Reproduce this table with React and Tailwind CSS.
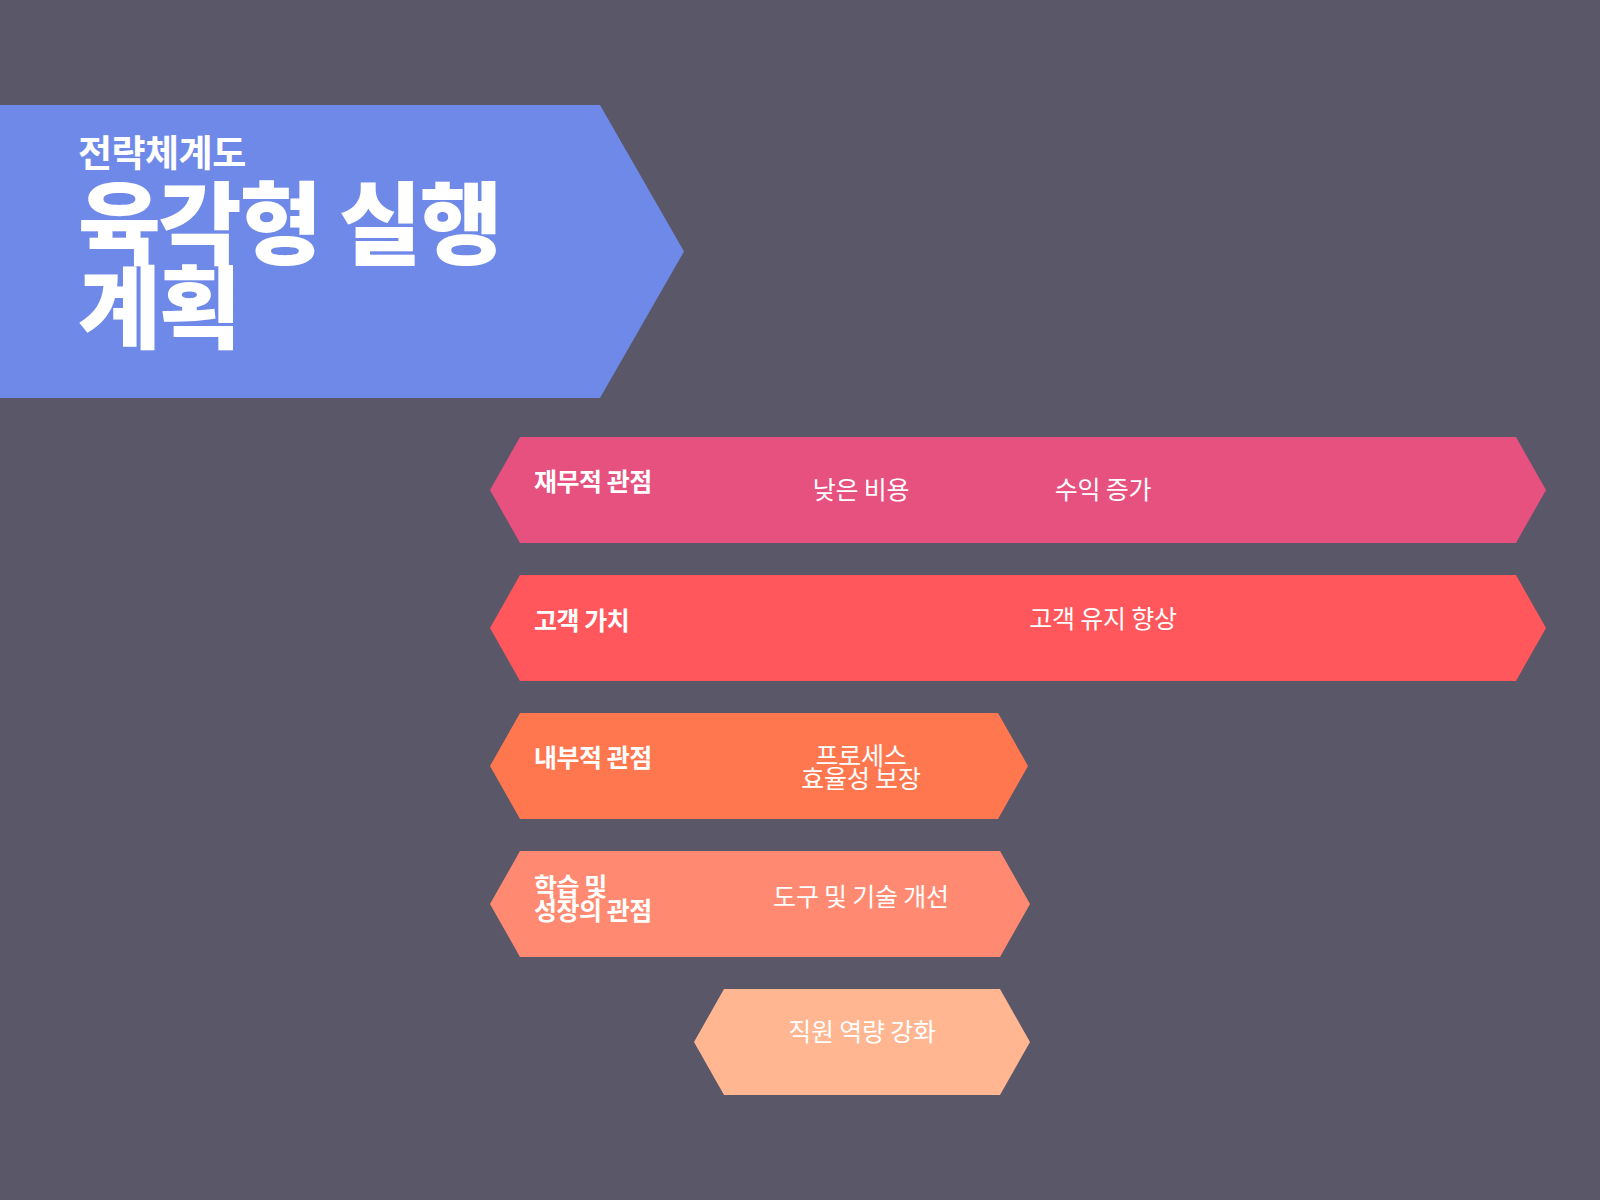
const HEX = '[clip-path:polygon(30px_0,calc(100%-30px)_0,100%_50%,calc(100%-30px)_100%,30px_100%,0_50%)]';

const rows = [
  { label: ['재무적 관점'], values: [['낮은 비용'], ['수익 증가']], bg: 'bg-[#e7517f]', width: 'w-[1056px]', lpad: 'pb-[20px]', vpad: 'pb-[4px]' },
  { label: ['고객 가치'], values: [[''], ['고객 유지 향상']], bg: 'bg-[#ff575c]', width: 'w-[1056px]', lpad: 'pb-[18px]', vpad: 'pb-[22px]' },
  { label: ['내부적 관점'], values: [['프로세스', '효율성 보장']], bg: 'bg-[#ff774f]', width: 'w-[538px]', lpad: 'pb-[20px]', vpad: 'pb-0' },
  { label: ['학습 및', '성장의 관점'], values: [['도구 및 기술 개선']], bg: 'bg-[#ff8a71]', width: 'w-[540px]', lpad: 'pb-[14px]', vpad: 'pb-[18px]' },
];

function Lines({ lines }) {
  return lines.map((l, i) => <div key={i}>{l}</div>);
}

function Row({ row }) {
  return (
    <div className={`${row.width} ${row.bg} ${HEX} h-[106px] flex items-center text-white`}>
      <div className={`w-[250px] pl-[44px] ${row.lpad} text-[25px] font-bold leading-[24px] tracking-[-0.5px]`}>
        <Lines lines={row.label} />
      </div>
      {row.values.map((v, i) => (
        <div key={i} className={`w-[242px] ${row.vpad} text-center text-[25px] leading-[23px] tracking-[-0.2px]`}>
          <Lines lines={v} />
        </div>
      ))}
    </div>
  );
}

export default function App() {
  return (
    <div className="w-[1600px] h-[1200px] bg-[#5a5769] overflow-hidden font-['Noto_Sans_CJK_KR','Noto_Sans',sans-serif]">
      <div className="h-[105px]" />
      <div className="w-[684px] h-[293px] bg-[#6f89e8] [clip-path:polygon(0_0,600px_0,100%_50%,600px_100%,0_100%)] pl-[78px] pt-[26px] text-white">
        <div className="text-[37px] font-bold leading-[40px] tracking-[-0.5px]">전략체계도</div>
        <div className="text-[90px] font-black leading-[84px] tracking-[-2px] mt-[5px]">
          <div>육각형 실행</div>
          <div>계획</div>
        </div>
      </div>
      <div className="mt-[39px] ml-[490px] flex flex-col gap-[32px]">
        {rows.map((r, i) => (
          <Row key={i} row={r} />
        ))}
        <div className={`ml-[204px] w-[336px] h-[106px] bg-[#ffb691] ${HEX} flex items-center justify-center text-white text-[25px] pb-[22px] tracking-[-0.2px]`}>
          직원 역량 강화
        </div>
      </div>
    </div>
  );
}
